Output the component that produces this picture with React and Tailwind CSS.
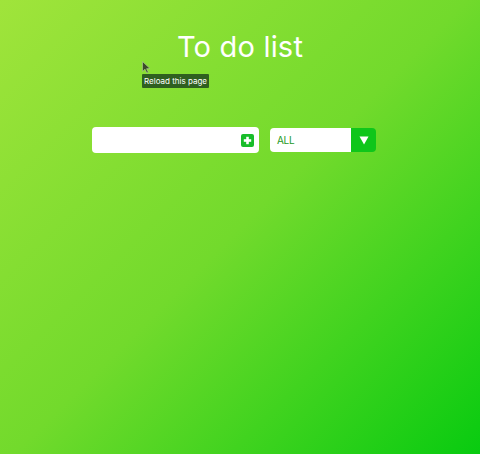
import React from "react";

export default function App() {
  return (
    <div
      className="relative w-[480px] h-[454px] overflow-hidden bg-[linear-gradient(135deg,#a0e43b_0%,#72da2c_50%,#08cb10_100%)]"
      style={{ fontFamily: "Inter, 'Open Sans', sans-serif" }}
    >
      <div className="flex flex-col items-center pt-[28px]">
        <h1 className="text-[29px] leading-[38px] font-normal text-white tracking-[0.2px]">
          To do list
        </h1>
        <div className="flex items-center gap-[11px] mt-[61px] ml-[-12px]">
          <div className="relative w-[167px] h-[26px] bg-white rounded-[4px] flex items-center justify-end pr-[5px]">
            <div className="w-[13px] h-[13px] bg-[#18bd2a] rounded-[2px] flex items-center justify-center">
              <svg width="9" height="9" viewBox="0 0 9 9">
                <rect x="3.2" y="0.8" width="2.6" height="7.4" fill="white" />
                <rect x="0.8" y="3.2" width="7.4" height="2.6" fill="white" />
              </svg>
            </div>
          </div>
          <div className="flex w-[106px] h-[24px] rounded-[4px] overflow-hidden">
            <div className="flex-1 bg-white flex items-center pl-[7px] text-[10px] text-[#249a24] tracking-[-0.3px]">
              ALL
            </div>
            <div className="w-[25px] bg-[#0fc61a] flex items-center justify-center">
              <svg width="10" height="9" viewBox="0 0 10 9">
                <path d="M0.5 0.5 H9.5 L5 8.5 Z" fill="white" />
              </svg>
            </div>
          </div>
        </div>
      </div>

      {/* cursor */}
      <svg
        className="absolute left-[142px] top-[61px]"
        width="9"
        height="13"
        viewBox="0 0 9 13"
      >
        <path
          d="M0.5 0.5 L0.5 10.5 L3 8.2 L4.8 12 L6.3 11.3 L4.6 7.7 L8 7.6 Z"
          fill="#3b4a2a"
          stroke="#a9c98a"
          strokeWidth="0.7"
        />
      </svg>

      {/* tooltip */}
      <div className="absolute left-[142px] top-[74px] h-[14px] px-[2px] bg-[#2f5f20] rounded-[1px] text-white text-[8px] leading-[14px] whitespace-nowrap">
        Reload this page
      </div>
    </div>
  );
}
